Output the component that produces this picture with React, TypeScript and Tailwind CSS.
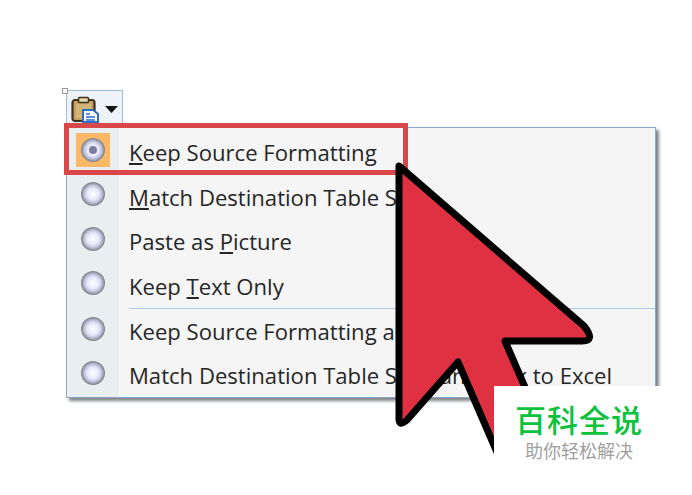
const font = { fontFamily: '"Open Sans", "Noto Sans", sans-serif' };

function Radio({ selected = false }: { selected?: boolean }) {
  return (
    <div className={"flex h-[34px] w-[34px] items-center justify-center " + (selected ? "bg-[#fbb968]" : "")}>
      <div className="flex h-[24px] w-[24px] items-center justify-center rounded-full bg-[radial-gradient(circle_at_50%_50%,#ffffff_0%,#e8e8fc_34%,#c4c6de_50%,#83868f_68%,#9a9ca5_84%,#e4e6e9_100%)]">
        {selected && <div className="h-[8px] w-[8px] rounded-full bg-[#7b7f9c]" />}
      </div>
    </div>
  );
}

function Row({ selected, last, children }: { selected?: boolean; last?: boolean; children: React.ReactNode }) {
  return (
    <div className={"flex items-center " + (last ? "h-[43px]" : "h-[44.5px]")}>
      <div className="flex w-[52px] shrink-0 justify-center pb-[5px]">
        <Radio selected={selected} />
      </div>
      <div className="whitespace-nowrap pl-[10px] text-[22.1px] leading-none text-[#262626]">{children}</div>
    </div>
  );
}

export default function App() {
  return (
    <div className="relative h-[495px] w-[692px] overflow-hidden bg-white pl-[66px] pt-[90px]" style={font}>
      <div className="absolute left-[62px] top-[88px] h-[6px] w-[6px] border border-[#9a9a9a] bg-white" />
      <div className="flex h-[37px] w-[57px] items-center gap-[3px] border border-b-0 border-[#9dbcdc] bg-[#eef3f8] pl-[4px]">
        <svg width="31" height="27" viewBox="0 0 31 27">
          <rect x="1.5" y="4" width="22" height="21" rx="2.5" fill="#c6a262" stroke="#3a3020" strokeWidth="2.2" />
          <rect x="7.5" y="1.5" width="10" height="5" rx="1" fill="#e8d7a8" stroke="#3a3020" strokeWidth="1.5" />
          <rect x="5" y="8" width="15" height="14" fill="#d3b577" />
          <path d="M12 26V14h10l5 4v8z" fill="#ffffff" stroke="#2a6fc4" strokeWidth="2" />
          <path d="M15 18h4M15 21h9M15 24h9" stroke="#2a6fc4" strokeWidth="1.6" />
        </svg>
        <svg width="13" height="7" viewBox="0 0 13 7"><path d="M0 0h13L6.5 7z" fill="#111" /></svg>
      </div>

      <div className="w-[590px] border border-[#88a9c9] bg-[#f5f5f5] pt-[2px] shadow-[3px_3px_3px_#7f8488] bg-[linear-gradient(to_right,#e9eef0_0,#e9eef0_52px,#f5f5f5_52px)]">
        <Row selected><u>K</u>eep Source Formatting</Row>
        <Row><u>M</u>atch Destination Table Style</Row>
        <Row>Paste as <u>P</u>icture</Row>
        <Row>Keep <u>T</u>ext Only</Row>
        <div className="ml-[62px] h-0 border-t border-[#a9cbe8]" />
        <Row>Keep Source Formatting and Link to Excel</Row>
        <Row last>Match Destination Table Style and Link to Excel</Row>
      </div>

      <div className="absolute left-[64px] top-[123px] h-[52px] w-[344px] border-[5px] border-[#d9474b]" />

      <svg className="absolute left-0 top-0" width="692" height="495" viewBox="0 0 692 495">
        <path
          d="M399 166 L584 326 Q596 341 582 341 L505 341 L565 480 L509 480 L458 362 L407 420 Q398 428 399 416 Z"
          fill="#e03142"
          stroke="#000"
          strokeWidth="7"
          strokeLinejoin="round"
        />
      </svg>

      <div className="absolute bottom-0 left-[494px] right-0 top-[386px] flex flex-col items-center bg-white pr-[28px] pt-[14px]">
        <div className="text-[31px] leading-[38px] tracking-[1px] text-[#0cc13c]" style={{ fontFamily: '"Noto Sans CJK SC", sans-serif', fontWeight: 500 }}>百科全说</div>
        <div className="mt-[1px] text-[18px] leading-[22px] text-[#9f9f9f]" style={{ fontFamily: '"Noto Sans CJK SC", sans-serif' }}>助你轻松解决</div>
      </div>
    </div>
  );
}
